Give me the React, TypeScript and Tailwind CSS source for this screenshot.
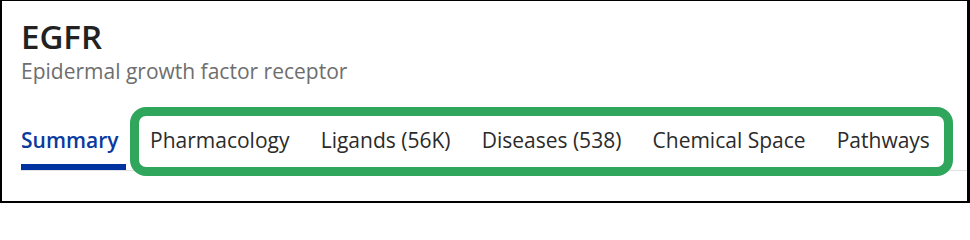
import React from "react";

const tabs = ["Pharmacology", "Ligands (56K)", "Diseases (538)", "Chemical Space", "Pathways"];

export default function App() {
  return (
    <div
      className="w-[970px] h-[203px] bg-white border-black border-t border-l-2 border-r-[3px] border-b-2 overflow-hidden"
      style={{ fontFamily: '"Open Sans", "Noto Sans", sans-serif' }}
    >
      <div className="pt-[16px] pl-[19px]">
        <div className="text-[33px] leading-[40px] font-semibold text-[#222222]">EGFR</div>
        <div className="text-[21px] leading-[28px] text-[#6e6e6e]">Epidermal growth factor receptor</div>
        <div className="relative mt-[28px] flex border-b border-[#e2e2e2]">
          <div className="relative h-[57px] pt-[13px] pr-2">
            <span className="text-[21px] leading-[28px] font-semibold text-[#0b3a9e]">Summary</span>
            <div className="absolute left-0 right-0 bottom-0 h-[6px] bg-[#0033a0]" />
          </div>
          <div className="flex ml-[8px]">
            {tabs.map((t) => (
              <div key={t} className="h-[57px] pt-[13px] px-[15.6px]">
                <span className="text-[21px] leading-[28px] text-[#2b2b2b]">{t}</span>
              </div>
            ))}
          </div>
          <div className="absolute left-[109px] top-[-6px] w-[823px] h-[69px] border-[9px] border-[#2fa65c] rounded-[16px] pointer-events-none" />
        </div>
      </div>
    </div>
  );
}
